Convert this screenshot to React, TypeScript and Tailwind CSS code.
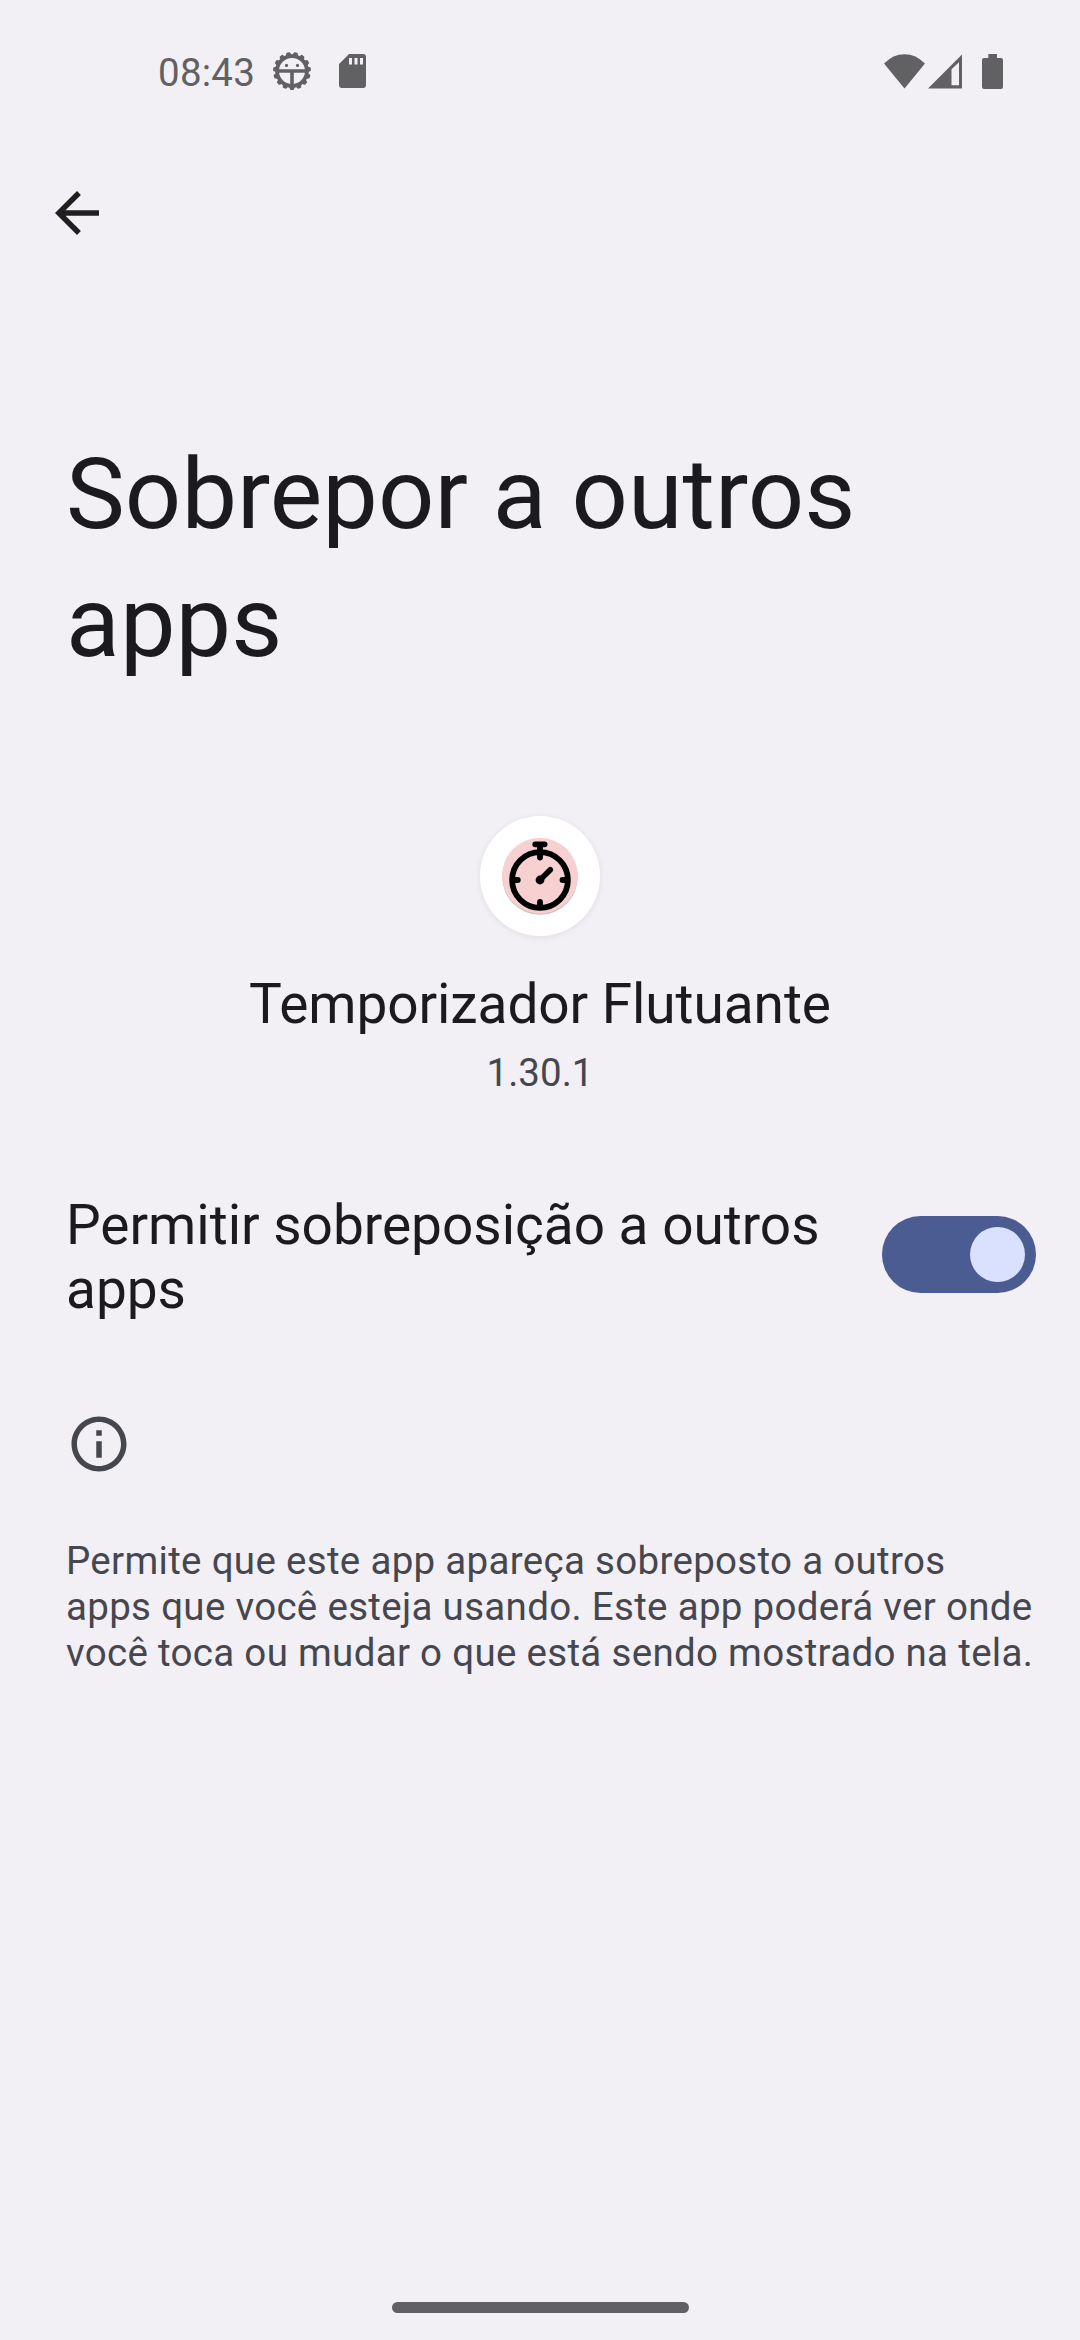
const teeth = Array.from({ length: 15 }, (_, i) => (i * 360) / 15 + 12);

function StatusBar() {
  return (
    <header className="flex h-[142px] items-center pl-[158px] pr-[77px] text-[#616163]">
      <span className="w-[96px] whitespace-nowrap pt-[3px] text-[38.5px] leading-[46px] tracking-[0.25px]">08:43</span>
      <svg className="ml-[17.5px] h-[40px] w-[40px]" viewBox="0 0 40 40" fill="none" stroke="currentColor">
        {teeth.map((angle) => (
          <path key={angle} d="M17.6 5.2 18.8 1.9H21.2L22.4 5.2Z" fill="currentColor" strokeWidth="1.6" strokeLinejoin="round" transform={`rotate(${angle} 20 20)`} />
        ))}
        <circle cx="20" cy="20" r="14.9" strokeWidth="3.8" />
        <path d="M6 20H34M20 20V34" strokeWidth="3.6" />
        <circle cx="14.5" cy="14.4" r="1.6" fill="currentColor" stroke="none" />
        <circle cx="25.5" cy="14.4" r="1.6" fill="currentColor" stroke="none" />
      </svg>
      <svg className="ml-[27px] h-[34px] w-[27px]" viewBox="0 0 27 34" fill="currentColor">
        <path fillRule="evenodd" d="M10 0H24Q27 0 27 3V31Q27 34 24 34H3Q0 34 0 31V10ZM10 4V10.5H13V4ZM15.5 4V10.5H18.5V4ZM21 4V10.5H24V4Z" />
      </svg>
      <div className="ml-auto flex items-center">
        <svg className="h-[35px] w-[41px]" viewBox="0 0 41 35" fill="currentColor">
          <path d="M0 9.5Q9 .2 20.5 .2T41 9.5L20.5 34.5Z" />
        </svg>
        <svg className="ml-[3.5px] h-[35px] w-[34px]" viewBox="0 0 34 35" fill="currentColor">
          <path fillRule="evenodd" d="M34 .5V34.5H0ZM23.5 15.2V31.3H31V8.2Z" />
        </svg>
        <svg className="ml-[20px] h-[35px] w-[21px]" viewBox="0 0 21 35" fill="currentColor">
          <path d="M6.3 0H15V4H19Q21 4 21 6V33Q21 35 19 35H2Q0 35 0 33V6Q0 4 2 4H6.3Z" />
        </svg>
      </div>
    </header>
  );
}

function AppIcon() {
  return (
    <div className="flex h-[120px] w-[120px] items-center justify-center rounded-full bg-white shadow-[0_1px_6px_rgba(0,0,0,0.08)]">
      <svg className="h-[120px] w-[120px]" viewBox="0 0 120 120" fill="none" stroke="#000" strokeLinecap="round">
        <circle cx="60" cy="61" r="37.8" fill="#b9a8a8" stroke="none" opacity="0.7" />
        <circle cx="59.9" cy="59.6" r="37.8" fill="#f7d1d1" stroke="none" />
        <circle cx="60" cy="64" r="27.9" strokeWidth="5.8" />
        <path d="M55.2 28.3H64.6M60 29V41.5M60 86V91M34 64H37.8M82.5 64H87" strokeWidth="5.8" />
        <path d="M60 64 70.3 53.7" strokeWidth="5.6" />
        <circle cx="60" cy="64" r="4.4" fill="#000" stroke="none" />
      </svg>
    </div>
  );
}

export default function App() {
  return (
    <div className="flex h-[2340px] w-[1080px] flex-col overflow-hidden bg-[#f2f0f5] font-['Roboto',sans-serif] text-[#1b1b1f]">
      <StatusBar />
      <button aria-label="Voltar" className="ml-[44px] mt-[38px] h-[66px] w-[66px] text-[#1f1f20]">
        <svg className="h-[66px] w-[66px]" viewBox="0 0 24 24" fill="currentColor">
          <path d="M20 11H7.83l5.59-5.59L12 4l-8 8 8 8 1.41-1.41L7.83 13H20v-2z" />
        </svg>
      </button>
      <h1 className="ml-[66px] mt-[184px] text-[99px] leading-[128px] tracking-[0.08px]">
        Sobrepor a outros
        <br />
        apps
      </h1>
      <section className="mt-[130px] flex flex-col items-center">
        <AppIcon />
        <h2 className="mt-[36px] text-[55px] leading-[64px] tracking-[-0.08px]">Temporizador Flutuante</h2>
        <p className="mt-[14px] text-[38.5px] leading-[46px] text-[#46464f]">1.30.1</p>
      </section>
      <label className="mt-[97px] flex items-center justify-between pl-[66px] pr-[44px]">
        <span className="text-[55px] leading-[64px] tracking-[-0.02px]">
          Permitir sobreposição a outros
          <br />
          apps
        </span>
        <span role="switch" aria-checked="true" className="mt-[-5px] flex h-[77px] w-[154px] items-center justify-end rounded-full bg-[#4a5c92] pr-[11px]">
          <span className="h-[55px] w-[55px] rounded-full bg-[#dae1ff]" />
        </span>
      </label>
      <footer className="ml-[66px] mt-[90px] text-[#46464f]">
        <svg className="h-[66px] w-[66px]" viewBox="0 0 24 24" fill="currentColor">
          <path d="M11 7h2v2h-2zm0 4h2v6h-2zm1-9C6.48 2 2 6.48 2 12s4.48 10 10 10 10-4.48 10-10S17.52 2 12 2zm0 18c-4.41 0-8-3.59-8-8s3.59-8 8-8 8 3.59 8 8-3.59 8-8 8z" />
        </svg>
        <p className="mt-[61px] whitespace-nowrap text-[38.5px] leading-[46px] tracking-[0.31px]">
          Permite que este app apareça sobreposto a outros
          <br />
          apps que você esteja usando. Este app poderá ver onde
          <br />
          você toca ou mudar o que está sendo mostrado na tela.
        </p>
      </footer>
      <div className="mx-auto mb-[27.5px] mt-auto h-[11px] w-[297px] rounded-full bg-[#616163]" />
    </div>
  );
}
